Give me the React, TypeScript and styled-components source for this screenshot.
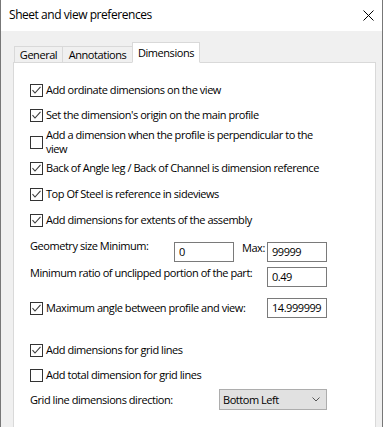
import React from "react";
import styled, { createGlobalStyle } from "styled-components";

const Global = createGlobalStyle`
  html, body { margin: 0; padding: 0; background: #ffffff; }
  body { font-family: "Open Sans", "Noto Sans", sans-serif; font-size: 11px; letter-spacing: -0.45px; color: #000; }
  * { box-sizing: border-box; }
`;

const Window = styled.div`
  width: 383px;
  height: 427px;
  border-left: 1px solid #777777;
  border-right: 1px solid #777777;
  display: flex;
  flex-direction: column;
  overflow: hidden;
  background: #f0f0f0;
`;

const TitleBar = styled.div`
  height: 31px;
  flex: none;
  background: #ffffff;
  display: flex;
  align-items: center;
  padding-left: 8px;
  padding-right: 8px;
`;

const Title = styled.div`
  flex: 1;
  font-size: 12px;
  line-height: 16px;
  margin-top: -1px;
`;

const CloseIcon = styled.svg`
  width: 11px;
  height: 11px;
  display: block;
`;

const Body = styled.div`
  flex: 1;
  display: flex;
  flex-direction: column;
  padding: 11px 6px 0 12px;
`;

const TabBar = styled.div`
  display: flex;
  align-items: flex-end;
  padding-left: 1px;
  height: 21px;
  margin-bottom: -1px;
  position: relative;
  z-index: 1;
`;

const Tab = styled.div<{ $w: number; $active?: boolean }>`
  width: ${(p) => p.$w}px;
  height: ${(p) => (p.$active ? 21 : 17)}px;
  margin-left: -1px;
  &:first-child { margin-left: 0; }
  border: 1px solid #d9d9d9;
  border-bottom: 1px solid ${(p) => (p.$active ? "#ffffff" : "#d9d9d9")};
  background: ${(p) => (p.$active ? "#ffffff" : "#f0f0f0")};
  display: flex;
  align-items: center;
  justify-content: center;
  padding-bottom: ${(p) => (p.$active ? 1 : 0)}px;
  line-height: 15px;
  position: relative;
  z-index: ${(p) => (p.$active ? 2 : 1)};
`;

const Panel = styled.div`
  flex: 1;
  background: #ffffff;
  border: 1px solid #d9d9d9;
  border-bottom: none;
  padding: 19px 0 0 16px;
  display: flex;
  flex-direction: column;
`;

const Row = styled.div<{ $mt: number; $align?: string }>`
  display: flex;
  align-items: ${(p) => p.$align || "center"};
  margin-top: ${(p) => p.$mt}px;
`;

const Box = styled.div`
  width: 13px;
  height: 13px;
  flex: none;
  border: 1px solid #333333;
  background: #ffffff;
  display: flex;
  align-items: center;
  justify-content: center;
`;

const CheckText = styled.div<{ $w?: number }>`
  margin-left: 3px;
  line-height: 14px;
  min-height: 16px;
  display: flex;
  align-items: center;
  ${(p) => (p.$w ? `width: ${p.$w}px; flex: none;` : "")}
  white-space: nowrap;
`;

const Label = styled.div<{ $w: number; $ml?: number; $mt?: number }>`
  width: ${(p) => p.$w}px;
  flex: none;
  margin-left: ${(p) => p.$ml || 0}px;
  margin-top: ${(p) => p.$mt || 0}px;
  line-height: 16px;
  white-space: nowrap;
`;

const TextBox = styled.div<{ $mt?: number }>`
  width: 60px;
  height: 20px;
  flex: none;
  margin-top: ${(p) => p.$mt || 0}px;
  border: 1px solid #7a7a7a;
  background: #ffffff;
  padding-left: 4px;
  line-height: 18px;
  overflow: hidden;
  white-space: nowrap;
`;

const Select = styled.div`
  width: 108px;
  height: 21px;
  flex: none;
  border: 1px solid #adadad;
  background: #e1e1e1;
  display: flex;
  align-items: center;
  padding: 0 6px 0 3px;
  line-height: 18px;
`;

const SelectText = styled.span`
  flex: 1;
`;

const Chevron = styled.svg`
  width: 8px;
  height: 5px;
  display: block;
`;

const Check = () => (
  <svg width="11" height="11" viewBox="0 0 11 11">
    <polyline points="1.5,5.2 4,8 9.5,1.8" fill="none" stroke="#3a3a3a" strokeWidth="1.1" />
  </svg>
);

const CheckBox = ({ checked }: { checked?: boolean }) => <Box>{checked ? <Check /> : null}</Box>;

export default function App() {
  return (
    <>
      <Global />
      <Window>
        <TitleBar>
          <Title>Sheet and view preferences</Title>
          <CloseIcon viewBox="0 0 11 11">
            <path d="M0.5 0.5 L10.5 10.5 M10.5 0.5 L0.5 10.5" stroke="#000" strokeWidth="1" />
          </CloseIcon>
        </TitleBar>
        <Body>
          <TabBar>
            <Tab $w={49}>General</Tab>
            <Tab $w={71}>Annotations</Tab>
            <Tab $w={68} $active>Dimensions</Tab>
          </TabBar>
          <Panel>
            <Row $mt={0}>
              <CheckBox checked />
              <CheckText>Add ordinate dimensions on the view</CheckText>
            </Row>
            <Row $mt={9}>
              <CheckBox checked />
              <CheckText>Set the dimension's origin on the main profile</CheckText>
            </Row>
            <Row $mt={5}>
              <CheckBox />
              <CheckText>
                Add a dimension when the profile is perpendicular to the
                <br />
                view
              </CheckText>
            </Row>
            <Row $mt={4}>
              <CheckBox checked />
              <CheckText>Back of Angle leg / Back of Channel is dimension reference</CheckText>
            </Row>
            <Row $mt={10}>
              <CheckBox checked />
              <CheckText>Top Of Steel is reference in sideviews</CheckText>
            </Row>
            <Row $mt={10}>
              <CheckBox checked />
              <CheckText>Add dimensions for extents of the assembly</CheckText>
            </Row>
            <Row $mt={10} $align="flex-start">
              <Label $w={144}>Geometry size Minimum:</Label>
              <TextBox $mt={4}>0</TextBox>
              <Label $w={25} $ml={8} $mt={2}>Max:</Label>
              <TextBox $mt={4}>99999</TextBox>
            </Row>
            <Row $mt={3} $align="flex-start">
              <Label $w={237}>Minimum ratio of unclipped portion of the part:</Label>
              <TextBox $mt={2}>0.49</TextBox>
            </Row>
            <Row $mt={11}>
              <CheckBox checked />
              <CheckText $w={221}>Maximum angle between profile and view:</CheckText>
              <TextBox>14.999999</TextBox>
            </Row>
            <Row $mt={24}>
              <CheckBox checked />
              <CheckText>Add dimensions for grid lines</CheckText>
            </Row>
            <Row $mt={9}>
              <CheckBox />
              <CheckText>Add total dimension for grid lines</CheckText>
            </Row>
            <Row $mt={6} $align="flex-start">
              <Label $w={189} $mt={3}>Grid line dimensions direction:</Label>
              <Select>
                <SelectText>Bottom Left</SelectText>
                <Chevron viewBox="0 0 8 5">
                  <polyline points="0.5,0.5 4,4 7.5,0.5" fill="none" stroke="#555" strokeWidth="1" />
                </Chevron>
              </Select>
            </Row>
          </Panel>
        </Body>
      </Window>
    </>
  );
}
